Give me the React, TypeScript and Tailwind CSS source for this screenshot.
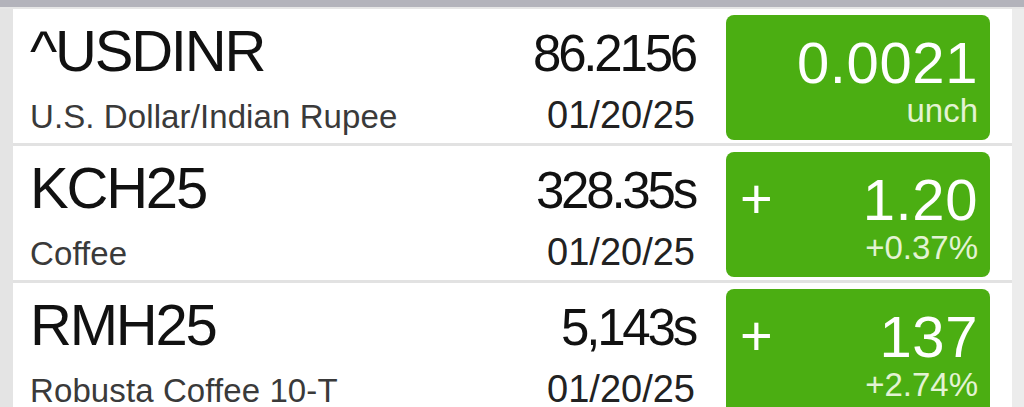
import React from "react";

type Row = {
  sym: string;
  name: string;
  price: string;
  date: string;
  sign: string;
  change: string;
  pct: string;
};

const rows: Row[] = [
  { sym: "^USDINR", name: "U.S. Dollar/Indian Rupee", price: "86.2156", date: "01/20/25", sign: "", change: "0.0021", pct: "unch" },
  { sym: "KCH25", name: "Coffee", price: "328.35s", date: "01/20/25", sign: "+", change: "1.20", pct: "+0.37%" },
  { sym: "RMH25", name: "Robusta Coffee 10-T", price: "5,143s", date: "01/20/25", sign: "+", change: "137", pct: "+2.74%" },
];

export default function App() {
  return (
    <div
      className="w-[1024px] h-[407px] overflow-hidden bg-[#e6e6e6] flex flex-col"
      style={{ fontFamily: '"Liberation Sans", Arial, sans-serif' }}
    >
      <div className="h-[7px] bg-[#b3b3bb] shrink-0" />
      <div className="h-[2px] bg-[#e6e6e6] shrink-0" />
      <div className="flex flex-1 min-h-0">
        <div className="w-[13px] bg-[#e4e4e4] shrink-0" />
        <div className="w-[999px] bg-white flex flex-col shrink-0">
          {rows.map((r, i) => (
            <React.Fragment key={r.sym}>
              {i > 0 && <div className="h-[3px] bg-[#e2e2e2] shrink-0" />}
              <div className="h-[134px] flex shrink-0">
                <div className="flex-1 flex flex-col pl-[17px] pt-[13px]">
                  <div className="text-[58px] leading-[58px] text-[#111] tracking-[-2.2px]">{r.sym}</div>
                  <div className="mt-[20px] text-[33px] leading-[33px] text-[#3a3a3a] tracking-[0.1px]">{r.name}</div>
                </div>
                <div className="flex flex-col items-end pt-[19px] mr-[31px]">
                  <div className="text-[51px] leading-[51px] text-[#111] tracking-[-3.2px]">{r.price}</div>
                  <div className="mt-[17px] text-[38px] leading-[38px] text-[#222] tracking-[0px]">{r.date}</div>
                </div>
                <div className="w-[264px] h-[125px] mt-[6px] mr-[22px] rounded-[8px] bg-[#4bae12] flex flex-col pr-[12px] pl-[17px] relative">
                  {r.sign && (
                    <div className="absolute left-[14px] top-[18px] text-[56px] leading-[57px] text-white">{r.sign}</div>
                  )}
                  <div className="mt-[19px] text-right text-[58px] leading-[57px] text-white tracking-[0.6px]">{r.change}</div>
                  <div className="mt-[4px] text-right text-[33px] leading-[32px] text-[#e3f3d3] tracking-[0px]">{r.pct}</div>
                </div>
              </div>
            </React.Fragment>
          ))}
        </div>
        <div className="flex-1 bg-[#ececec]" />
      </div>
    </div>
  );
}
